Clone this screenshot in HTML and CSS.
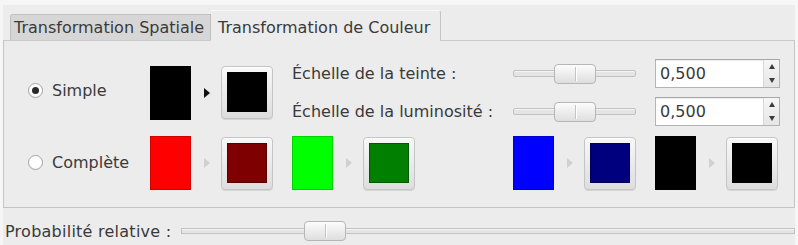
FILE: index.html
```html
<!DOCTYPE html>
<html lang="fr">
<head>
    <meta charset="UTF-8">
    <title>Transformation de Couleur</title>
    <link rel="stylesheet" href="styles.css">
</head>
<body>
    <div class="window">
        <div class="tabs">
            <div class="tab">Transformation Spatiale</div>
            <div class="tab active">Transformation de Couleur</div>
        </div>
        <div class="pane">
            <!-- mode simple -->
            <div class="row">
                <label class="choice"><span class="radio checked"></span>Simple</label>
                <div class="pair">
                    <span class="swatch black"></span>
                    <span class="arrow on"></span>
                    <span class="colorbtn"><span class="fill black"></span></span>
                </div>
                <div class="settings">
                    <span class="label">Échelle de la teinte :</span>
                    <div class="slider"><span class="groove"></span><span class="handle mid"></span></div>
                    <div class="spin"><span class="value">0,500</span><span class="steps"><i class="up"></i><i class="down"></i></span></div>

                    <span class="label">Échelle de la luminosité :</span>
                    <div class="slider"><span class="groove"></span><span class="handle mid"></span></div>
                    <div class="spin"><span class="value">0,500</span><span class="steps"><i class="up"></i><i class="down"></i></span></div>
                </div>
            </div>
            <!-- mode complet -->
            <div class="row full">
                <label class="choice"><span class="radio"></span>Complète</label>
                <div class="pair">
                    <span class="swatch red"></span>
                    <span class="arrow"></span>
                    <span class="colorbtn"><span class="fill darkred"></span></span>
                </div>
                <div class="pair">
                    <span class="swatch green"></span>
                    <span class="arrow"></span>
                    <span class="colorbtn"><span class="fill darkgreen"></span></span>
                </div>
                <div class="pair wide">
                    <span class="swatch blue"></span>
                    <span class="arrow"></span>
                    <span class="colorbtn"><span class="fill navy"></span></span>
                </div>
                <div class="pair">
                    <span class="swatch black"></span>
                    <span class="arrow"></span>
                    <span class="colorbtn"><span class="fill black"></span></span>
                </div>
            </div>
        </div>
        <div class="prob">
            <span class="label">Probabilité relative :</span>
            <div class="slider long"><span class="groove"></span><span class="handle" style="left:20%"></span></div>
        </div>
    </div>
</body>
</html>
```

FILE: styles.css
```css
*{
    padding: 0;
    margin: 0;
    box-sizing: border-box;
}
body{
    background: #f6f6f6;
    font-family: "DejaVu Sans", "Liberation Sans", sans-serif;
    font-size: 16px;
    color: #3a3a3a;
    width: 798px;
    height: 245px;
    overflow: hidden;
}
.window{
    margin: 5px 3px 0 3px;
    height: 240px;
    background: #ececec;
}
/* onglets */
.tabs{
    display: flex;
    align-items: flex-end;
    padding: 5px 0 0 7px;
}
.tab{
    width: 201px;
    height: 26px;
    line-height: 25px;
    padding-left: 3px;
    white-space: nowrap;
    background: #d6d6d6;
    border: 1px solid #c0c0c0;
    border-bottom: none;
    border-radius: 3px 0 0 0;
}
.tab.active{
    width: 230px;
    height: 31px;
    padding: 4px 0 0 7px;
    margin-bottom: -1px;
    background: #ececec;
    border-color: #f8f8f8 #c4c4c4 #ececec #f4f4f4;
    border-left: none;
    border-radius: 0 3px 0 0;
    position: relative;
}
.pane{
    border: 1px solid #c4c4c4;
    border-top-color: #cacaca;
    padding: 18px 0 17px 0;
}
.row{
    display: flex;
    align-items: center;
}
.row.full{
    margin-top: 10px;
}
.choice{
    display: flex;
    align-items: center;
    flex-shrink: 0;
    width: 146px;
    padding-left: 24px;
    margin-top: -4px;
}
.row.full .choice{
    margin-top: -2px;
}
.radio{
    width: 15px;
    height: 15px;
    margin-right: 9px;
    border: 1px solid #a4a4a4;
    border-radius: 50%;
    background: radial-gradient(circle at 50% 40%, #ffffff 55%, #e6e6e6);
    display: flex;
    align-items: center;
    justify-content: center;
}
.radio.checked::after{
    content: "";
    width: 7px;
    height: 7px;
    border-radius: 50%;
    background: #2a2a2a;
}
/* couleurs source -> cible */
.pair{
    display: flex;
    align-items: center;
    flex-shrink: 0;
    width: 123px;
    margin-right: 19px;
}
.pair:last-child{
    margin-right: 0;
}
.pair.wide{
    margin-left: 79px;
}
.swatch{
    width: 41px;
    height: 54px;
    border: 1px solid rgba(0,0,0,0.18);
}
.arrow{
    width: 30px;
    display: flex;
    justify-content: center;
}
.arrow::before{
    content: "";
    margin-left: 2px;
    border-left: 6px solid #d0d0d0;
    border-top: 5px solid transparent;
    border-bottom: 5px solid transparent;
}
.arrow.on::before{
    border-left-color: #111;
}
.colorbtn{
    width: 52px;
    height: 53px;
    padding: 5px 0 0 5px;
    border: 1px solid #c4c4c4;
    border-radius: 4px;
    background: linear-gradient(#f8f8f8, #dddddd);
    box-shadow: inset 0 1px 0 #ffffff, 0 1px 0 #d6d6d6;
}
.fill{
    display: block;
    width: 40px;
    height: 40px;
    border: 1px solid rgba(0,0,0,0.3);
}
.black{ background: #000; }
.red{ background: #ff0000; }
.darkred{ background: #7f0000; }
.green{ background: #00ff00; }
.darkgreen{ background: #007f00; }
.blue{ background: #0000ff; }
.navy{ background: #00007f; }
/* échelles */
.settings{
    display: grid;
    grid-template-columns: 221px 142px 125px;
    grid-template-rows: 29px 29px;
    row-gap: 9px;
    align-items: center;
}
.label{
    white-space: nowrap;
}
.slider{
    position: relative;
    height: 22px;
    width: 123px;
    display: flex;
    align-items: center;
}
.groove{
    display: block;
    width: 100%;
    height: 7px;
    border: 1px solid #c2c2c2;
    border-radius: 2px;
    background: #e4e4e4;
    box-shadow: inset 0 1px 0 #f4f4f4;
}
.handle{
    position: absolute;
    top: 1px;
    width: 42px;
    height: 20px;
    border: 1px solid #b6b6b6;
    border-radius: 4px;
    background: linear-gradient(#fcfcfc, #dedede);
}
.handle::after{
    content: "";
    position: absolute;
    left: 20px;
    top: 2px;
    bottom: 2px;
    width: 1px;
    background: #c4c4c4;
    box-shadow: 1px 0 0 #ffffff;
}
.handle.mid{
    left: 41px;
}
.spin{
    display: flex;
    height: 29px;
    width: 125px;
    border: 1px solid #b4b4b4;
    border-top-color: #a8a8a8;
    background: #fff;
    box-shadow: inset 0 1px 1px rgba(0,0,0,0.08);
}
.value{
    flex: 1;
    padding-left: 4px;
    line-height: 27px;
}
.steps{
    width: 16px;
    display: flex;
    flex-direction: column;
    justify-content: space-around;
    align-items: center;
    background: linear-gradient(#f6f6f6, #e6e6e6);
    border-left: 1px solid #d8d8d8;
}
.steps i{
    width: 0;
    height: 0;
    border-left: 3px solid transparent;
    border-right: 3px solid transparent;
}
.steps .up{
    border-bottom: 5px solid #3c3c3c;
}
.steps .down{
    border-top: 5px solid #3c3c3c;
}
/* probabilité */
.prob{
    display: flex;
    align-items: center;
    height: 26px;
    margin-top: 10px;
    padding-left: 2px;
}
.prob .label{
    letter-spacing: 0.25px;
}
.slider.long{
    flex: 1;
    width: auto;
    margin-left: 10px;
}
.slider.long .groove{
    height: 6px;
    border-radius: 0;
}
```
